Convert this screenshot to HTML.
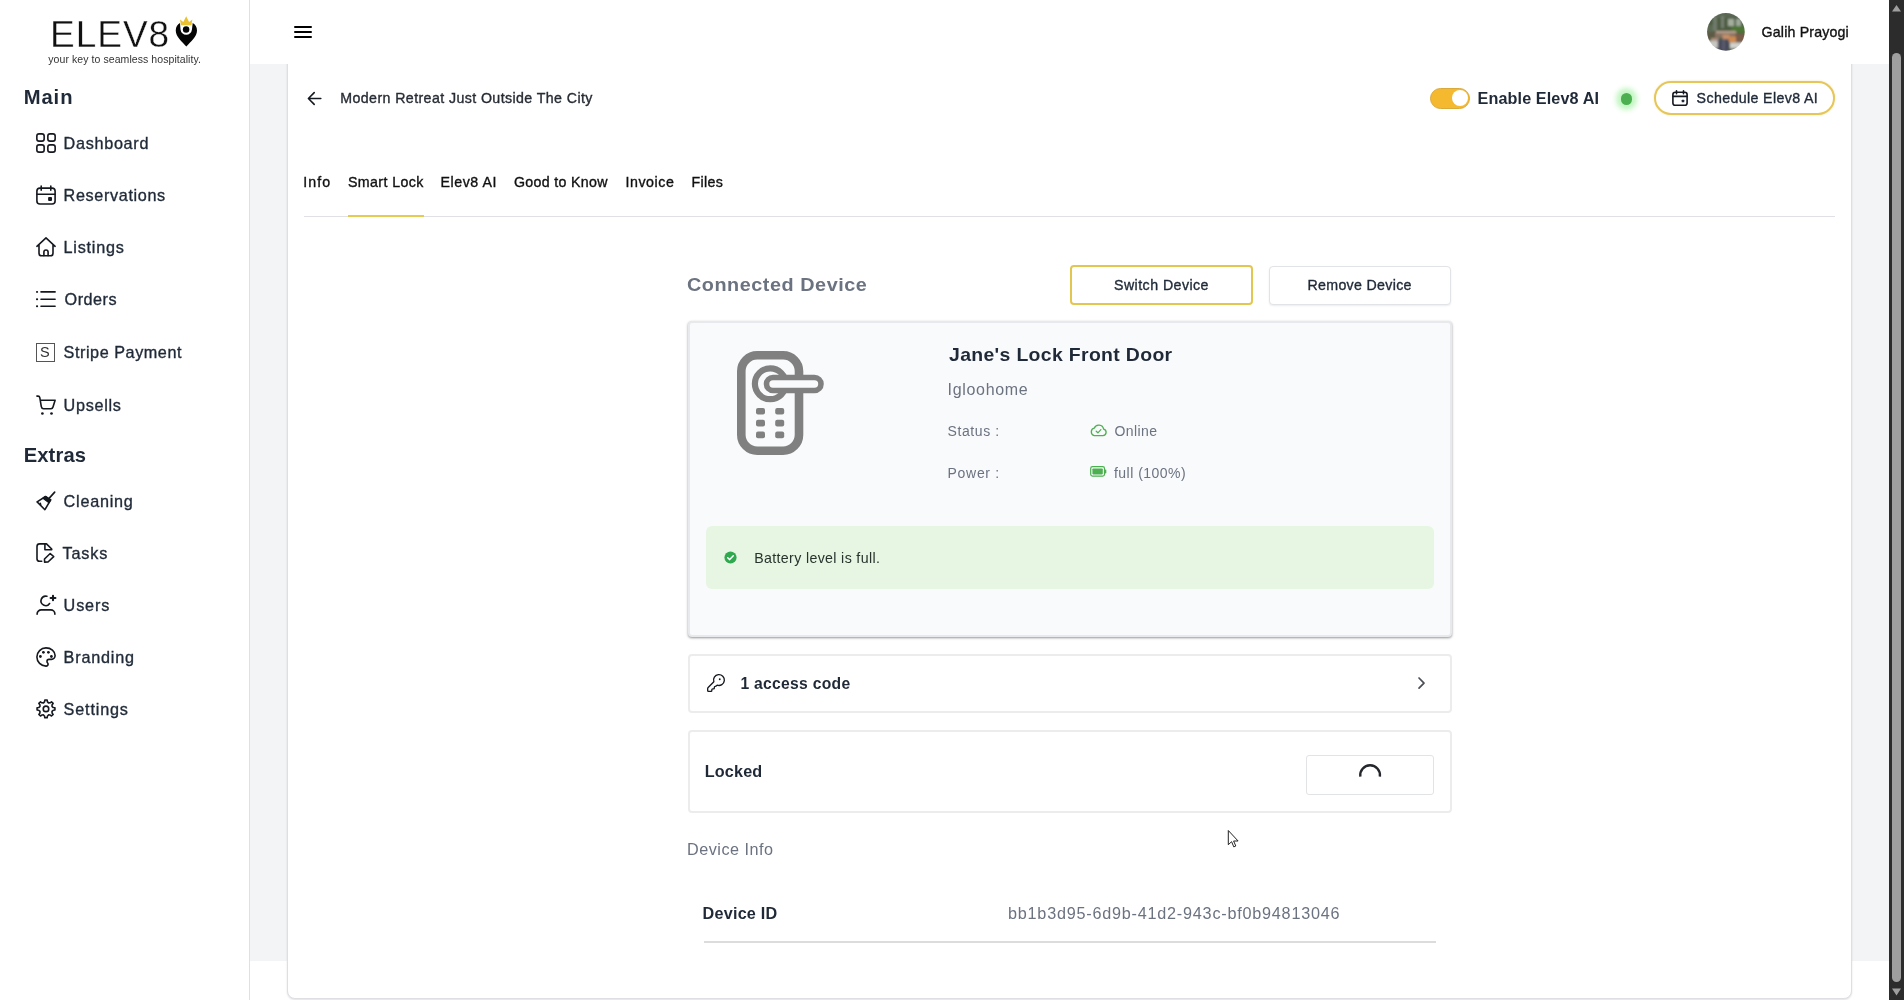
<!DOCTYPE html>
<html lang="en">
<head>
<meta charset="utf-8">
<title>Elev8 - Smart Lock</title>
<style>
*{box-sizing:border-box;margin:0;padding:0}
html,body{width:1904px;height:1000px;overflow:hidden;background:#fff}
body{font-family:"Liberation Sans",sans-serif;position:relative;color:#1f2937}
.abs{position:absolute}
.t{position:absolute;white-space:pre;line-height:20px;display:block;will-change:opacity}
#grey{left:250px;top:64px;width:1639px;height:897px;background:#f3f4f6}
#side{left:0;top:0;width:250px;height:1000px;background:#fff;border-right:1px solid #e0e0e0}
#top{left:250px;top:0;width:1639px;height:64px;background:#fff}
#card{left:287px;top:56px;width:1565px;height:943px;background:#fff;border:1px solid #dddfe3;border-radius:8px;box-shadow:0 1px 2px rgba(0,0,0,.12)}
#sb{left:1889px;top:0;width:15px;height:1000px;background:#2c2c2c}
#sbt{left:1892px;top:53px;width:9px;height:929px;background:#9f9f9f;border-radius:5px}
svg{position:absolute;overflow:visible}
.ic{fill:none;stroke:#14181f;stroke-width:1.6;stroke-linecap:round;stroke-linejoin:round}
</style>
</head>
<body>
<main>
<div id="grey" class="abs"></div>
<section id="card" class="abs"></section>
<!-- back arrow -->
<svg style="left:306px;top:90px" width="17" height="17" viewBox="0 0 17 17"><path class="ic" d="M14.8 8.5H2.6M8.2 2.6 2.4 8.5l5.8 5.9" stroke-width="1.6"/></svg>
<!-- toggle -->
<div class="abs" style="left:1430px;top:88px;width:40px;height:20.5px;border-radius:11px;background:#f4b92f;border:1.5px solid #d9a93c"></div>
<div class="abs" style="left:1452px;top:90.2px;width:16px;height:16px;border-radius:8px;background:#fff"></div>
<!-- green dot -->
<div class="abs" style="left:1620.5px;top:93.3px;width:11.4px;height:11.4px;border-radius:6px;background:#4caf50;box-shadow:0 0 5px 5px rgba(144,238,144,.55)"></div>
<!-- schedule button -->
<div class="abs" style="left:1654px;top:81px;width:180.800px;height:34px;border-radius:17px;border:2px solid #e6c658;background:#fff;box-shadow:0 0 2px rgba(230,198,88,.5)"></div>
<svg style="left:1672px;top:90px" width="16" height="16" viewBox="0 0 16 16"><g class="ic" stroke-width="1.5"><rect x="0.9" y="2.3" width="14.2" height="13" rx="2.3"/><path d="M1 6.4h14M4.5 0.8v3M11.5 0.8v3"/></g><rect x="9.7" y="9.7" width="2.6" height="2.6" rx=".6" fill="#1f2937"/></svg>
<!-- tabs line -->
<div class="abs" style="left:304px;top:216px;width:1531px;height:1px;background:#dfe1e4"></div>
<div class="abs" style="left:348px;top:214.5px;width:76px;height:2.5px;background:#e5cb50"></div>
<!-- buttons -->
<div class="abs" style="left:1070px;top:265px;width:183px;height:40px;border-radius:4px;border:2px solid #e3c64f;background:#fff"></div>
<div class="abs" style="left:1269.2px;top:265.5px;width:182.3px;height:39px;border-radius:4px;border:1px solid #e1e3e6;background:#fff;box-shadow:0 1px 2px rgba(0,0,0,.08)"></div>
<!-- device card -->
<div class="abs" style="left:688px;top:321px;width:764px;height:316px;border-radius:4px;border:2px solid #e7e9ec;background:#f9fafb;box-shadow:0 1px 2.5px rgba(0,0,0,.42)"></div>
<!-- lock icon -->
<svg style="left:730px;top:345px" width="100" height="116" viewBox="730 345 100 116">
<g fill="none" stroke="#808080">
<rect x="741.3" y="355.3" width="57.7" height="95.4" rx="16" stroke-width="8.6"/>
<circle cx="770.3" cy="383.8" r="15.4" stroke-width="6.2" fill="#f9fafb"/>
<rect x="766.5" y="377.5" width="54.5" height="13" rx="6.5" stroke-width="5.6" fill="#f9fafb"/>
</g>
<g fill="#808080">
<rect x="756" y="408" width="9" height="6.6" rx="2"/><rect x="775.2" y="408" width="9" height="6.6" rx="2"/>
<rect x="756" y="419.8" width="9" height="6.6" rx="2"/><rect x="775.2" y="419.8" width="9" height="6.6" rx="2"/>
<rect x="756" y="431.6" width="9" height="6.6" rx="2"/><rect x="775.2" y="431.6" width="9" height="6.6" rx="2"/>
</g></svg>
<!-- cloud icon -->
<svg style="left:1090px;top:423px" width="17" height="14" viewBox="0 0 17 14"><path d="M4.3 12.6h8.6a3.3 3.3 0 0 0 .7-6.5 4.9 4.9 0 0 0-9.4-.9A3.8 3.8 0 0 0 4.3 12.6Z" fill="none" stroke="#4caf50" stroke-width="1.3" stroke-linejoin="round"/><path d="M6.2 8.2l1.7 1.6 3-3.2" fill="none" stroke="#4caf50" stroke-width="1.2" stroke-linecap="round" stroke-linejoin="round"/></svg>
<!-- battery icon -->
<svg style="left:1089.5px;top:466.3px" width="17" height="11" viewBox="0 0 17 11"><rect x="0.7" y="0.7" width="13.8" height="9.4" rx="1.8" fill="none" stroke="#4caf50" stroke-width="1.2"/><rect x="2.4" y="2.4" width="10.4" height="6" rx=".8" fill="#4caf50"/><rect x="14.9" y="3.4" width="1.4" height="4" rx=".6" fill="#4caf50"/></svg>
<!-- alert -->
<div class="abs" style="left:706px;top:526px;width:727.5px;height:63px;border-radius:6px;background:#e6f6e2"></div>
<svg style="left:724.1px;top:550.5px" width="13" height="13" viewBox="0 0 13 13"><circle cx="6.5" cy="6.5" r="6.1" fill="#2fa84f"/><path d="M3.7 6.7l2 1.9 3.6-3.8" fill="none" stroke="#fff" stroke-width="1.5" stroke-linecap="round" stroke-linejoin="round"/></svg>
<!-- access code card -->
<div class="abs" style="left:688px;top:654px;width:764px;height:58.5px;border-radius:4px;border:2px solid #ececec;background:#fff"></div>
<svg style="left:706px;top:673.2px" width="20" height="20" viewBox="0 0 24 24"><path class="ic" stroke-width="1.9" d="M2.586 17.414A2 2 0 0 0 2 18.828V21a1 1 0 0 0 1 1h3a1 1 0 0 0 1-1v-1a1 1 0 0 1 1-1h1a1 1 0 0 0 1-1v-1a1 1 0 0 1 1-1h.172a2 2 0 0 0 1.414-.586l.814-.814a6.5 6.5 0 1 0-4-4z"/><circle cx="16.5" cy="7.5" r="1.1" fill="#14181f"/></svg>
<svg style="left:1417px;top:676px" width="9" height="14" viewBox="0 0 9 14"><path d="M2 2 7 7.100 2 12.200" fill="none" stroke="#4a4e55" stroke-width="1.7" stroke-linecap="round" stroke-linejoin="round"/></svg>
<!-- locked card -->
<div class="abs" style="left:688px;top:730px;width:764px;height:82.5px;border-radius:4px;border:2px solid #ececec;background:#fff"></div>
<div class="abs" style="left:1306px;top:755px;width:128px;height:39.5px;border-radius:3px;border:1.5px solid #e2e3e5;background:#fff"></div>
<svg style="left:1355px;top:760px" width="30" height="20" viewBox="1355 760 30 20"><path d="M1360.3 776.6A9.9 9.9 0 1 1 1379.9 776.6" fill="none" stroke="#24272c" stroke-width="2.4"/></svg>
<!-- device id line -->
<div class="abs" style="left:703.5px;top:941px;width:732.5px;height:1.5px;background:#dcdcdc"></div>
<!-- cursor -->
<svg style="left:1227px;top:829px" width="14" height="20" viewBox="0 0 14 20"><path d="M1.3 1.5v14.2l3.3-3 2.2 5.2 2-.9-2.2-5h4.5Z" fill="#fff" stroke="#222" stroke-width="1" stroke-linejoin="round"/></svg>

<span class="t" style="left:340.30px;top:88px;font-size:14.2px;letter-spacing:0.406px;color:#272c34;font-weight:400;-webkit-text-stroke:0.35px currentColor;">Modern Retreat Just Outside The City</span>
<span class="t" style="left:303.30px;top:172px;font-size:14.2px;letter-spacing:1.067px;color:#111;font-weight:400;-webkit-text-stroke:0.35px currentColor;">Info</span>
<span class="t" style="left:348.00px;top:172px;font-size:14.2px;letter-spacing:0.400px;color:#111;font-weight:400;-webkit-text-stroke:0.35px currentColor;">Smart Lock</span>
<span class="t" style="left:440.60px;top:172px;font-size:14.2px;letter-spacing:0.543px;color:#111;font-weight:400;-webkit-text-stroke:0.35px currentColor;">Elev8 AI</span>
<span class="t" style="left:514.00px;top:172px;font-size:14.2px;letter-spacing:0.327px;color:#111;font-weight:400;-webkit-text-stroke:0.35px currentColor;">Good to Know</span>
<span class="t" style="left:625.40px;top:172px;font-size:14.2px;letter-spacing:0.600px;color:#111;font-weight:400;-webkit-text-stroke:0.35px currentColor;">Invoice</span>
<span class="t" style="left:691.40px;top:172px;font-size:14.2px;letter-spacing:0.400px;color:#111;font-weight:400;-webkit-text-stroke:0.35px currentColor;">Files</span>
<span class="t" style="left:1477.60px;top:88px;font-size:16.2px;letter-spacing:0.100px;color:#1f2937;font-weight:700;">Enable Elev8 AI</span>
<span class="t" style="left:1696.60px;top:88px;font-size:14.2px;letter-spacing:0.375px;color:#1f2937;font-weight:400;-webkit-text-stroke:0.35px currentColor;">Schedule Elev8 AI</span>
<span class="t" style="left:687.00px;top:275px;font-size:18.5px;letter-spacing:0.511px;color:#6b7280;font-weight:700;transform-origin:0 0;transform:scaleX(1.07);">Connected Device</span>
<span class="t" style="left:1114.00px;top:275px;font-size:14.2px;letter-spacing:0.450px;color:#1f2937;font-weight:400;-webkit-text-stroke:0.35px currentColor;">Switch Device</span>
<span class="t" style="left:1307.50px;top:275px;font-size:14.2px;letter-spacing:0.317px;color:#1f2937;font-weight:400;-webkit-text-stroke:0.35px currentColor;">Remove Device</span>
<span class="t" style="left:948.80px;top:345px;font-size:18.5px;letter-spacing:0.317px;color:#1f2937;font-weight:700;transform-origin:0 0;transform:scaleX(1.05);">Jane&#x27;s Lock Front Door</span>
<span class="t" style="left:947.60px;top:380px;font-size:16px;letter-spacing:0.675px;color:#6b7280;font-weight:400;">Igloohome</span>
<span class="t" style="left:947.60px;top:421px;font-size:14px;letter-spacing:0.586px;color:#6b7280;font-weight:400;">Status :</span>
<span class="t" style="left:1114.40px;top:421px;font-size:14px;letter-spacing:0.420px;color:#6b7280;font-weight:400;">Online</span>
<span class="t" style="left:947.60px;top:463px;font-size:14px;letter-spacing:0.683px;color:#6b7280;font-weight:400;">Power :</span>
<span class="t" style="left:1114.00px;top:463px;font-size:14px;letter-spacing:0.470px;color:#6b7280;font-weight:400;">full (100%)</span>
<span class="t" style="left:754.20px;top:548px;font-size:14.2px;letter-spacing:0.352px;color:#27332c;font-weight:400;">Battery level is full.</span>
<span class="t" style="left:740.40px;top:674px;font-size:15.7px;letter-spacing:0.283px;color:#1f2937;font-weight:700;">1 access code</span>
<span class="t" style="left:704.70px;top:761px;font-size:16.2px;letter-spacing:0.180px;color:#1f2937;font-weight:700;">Locked</span>
<span class="t" style="left:687.00px;top:839px;font-size:16.2px;letter-spacing:0.500px;color:#6b7280;font-weight:400;">Device Info</span>
<span class="t" style="left:702.60px;top:903px;font-size:16.2px;letter-spacing:0.212px;color:#1f2937;font-weight:700;">Device ID</span>
<span class="t" style="left:1008.00px;top:903px;font-size:16.2px;letter-spacing:0.780px;color:#6b7280;font-weight:400;">bb1b3d95-6d9b-41d2-943c-bf0b94813046</span>
</main>
<header>
<div id="top" class="abs"></div>
<!-- hamburger -->
<div class="abs" style="left:294px;top:26px;width:18px;height:2px;background:#000;border-radius:1px"></div>
<div class="abs" style="left:294px;top:31px;width:18px;height:2px;background:#000;border-radius:1px"></div>
<div class="abs" style="left:294px;top:36px;width:18px;height:2px;background:#000;border-radius:1px"></div>
<!-- avatar -->
<svg style="left:1707px;top:12.800px" width="38" height="38" viewBox="0 0 38 38">
<defs><clipPath id="avc"><circle cx="18.900" cy="18.850" r="18.850"/></clipPath>
<filter id="avb" x="-20%" y="-20%" width="140%" height="140%"><feGaussianBlur stdDeviation="1.300"/></filter></defs>
<g clip-path="url(#avc)"><g filter="url(#avb)">
<rect x="-4" y="-4" width="46" height="46" fill="#4d5c42"/>
<rect x="-4" y="-4" width="46" height="9" fill="#5a6653"/>
<rect x="6" y="4" width="4" height="14" fill="#6f7a6b"/>
<rect x="14" y="3" width="3" height="12" fill="#75806f"/>
<rect x="21" y="6" width="6" height="7" fill="#a4ae9f"/>
<rect x="29" y="6" width="5" height="7" fill="#9ea99a"/>
<rect x="24" y="13" width="16" height="7" fill="#4d7436"/>
<rect x="-2" y="12" width="8" height="8" fill="#5d6a52"/>
<rect x="-2" y="19" width="13" height="9" fill="#5b5a45"/>
<rect x="9" y="18" width="20" height="2.500" fill="#b9a391"/>
<rect x="8" y="20" width="22" height="4.500" fill="#8b7463"/>
<rect x="28" y="21" width="12" height="8" fill="#7a5b49"/>
<rect x="15.500" y="21.500" width="7" height="5" fill="#c48f6c"/>
<rect x="21.500" y="23.500" width="7.500" height="6" fill="#d08a50"/>
<rect x="4" y="25" width="8" height="3" fill="#a8907c"/>
<rect x="-2" y="28" width="13" height="7" fill="#c6c6c2"/>
<rect x="23" y="29.500" width="14" height="6" fill="#d2d2ce"/>
<rect x="10.800" y="26.500" width="11.200" height="14" fill="#4a4c5d"/>
<rect x="16" y="27" width="1.200" height="10" fill="#6a6c7b"/>
</g></g></svg>

<span class="t" style="left:1761.60px;top:22px;font-size:14.2px;letter-spacing:0.167px;color:#111;font-weight:400;-webkit-text-stroke:0.35px currentColor;">Galih Prayogi</span>
</header>
<aside>
<div id="side" class="abs"></div>
<nav>
<!-- logo -->
<span class="t" id="logo" style="left:50.0px;top:15.1px;font-size:37px;line-height:40px;letter-spacing:1.0px;color:#111;-webkit-text-stroke:0.35px #fff">ELEV8</span>
<svg style="left:170px;top:10px" width="34" height="42" viewBox="170 10 34 42">
<path d="M180 22.900C177.400 24.300 175.750 27 175.750 30.400 C175.750 36.600 182 41.600 186.350 46.400 C190.700 41.600 197 36.600 197 30.400 C197 27 195.300 24.300 192.700 22.900 L191.950 29.600 A5.750 5.750 0 0 1 180.500 29.600 Z" fill="#050505"/>
<circle cx="186.100" cy="29.600" r="3.250" fill="#050505"/>
<path d="M180.900 25.200 180 19.400 183.300 21.900 186.200 16.200 189.100 21.900 192.300 19.400 191.500 25.200Z" fill="#ecc131"/>
</svg>
<!-- dashboard -->
<svg style="left:36px;top:133px" width="20" height="20" viewBox="0 0 20 20"><g class="ic" stroke-width="2"><rect x=".85" y=".85" width="7.3" height="7.3" rx="2.2"/><rect x="11.85" y=".85" width="7.3" height="7.3" rx="2.2"/><rect x=".85" y="11.85" width="7.3" height="7.3" rx="2.2"/><rect x="11.85" y="11.85" width="7.3" height="7.3" rx="2.2"/></g></svg>
<!-- reservations -->
<svg style="left:36px;top:185px" width="20" height="20" viewBox="0 0 20 20"><g class="ic" stroke-width="2"><rect x=".9" y="3.1" width="18.2" height="15.9" rx="3"/><path d="M1 9.300h18M5.200 1.100v4.200M14.800 1.100v4.200"/></g><rect x="12.100" y="12.100" width="3.900" height="3.900" rx=".9" fill="#14181f"/></svg>
<!-- listings -->
<svg style="left:36px;top:237px" width="20" height="20" viewBox="0 0 20 20"><g class="ic" stroke-width="2"><path d="M.9 9.3 10 .9l9.1 8.4M3 8v8.300a2.500 2.500 0 0 0 2.500 2.500h9a2.500 2.500 0 0 0 2.500-2.500V8"/><path d="M7.900 18.600v-3.500a2.100 2.100 0 0 1 4.200 0v3.500"/></g></svg>
<!-- orders -->
<svg style="left:36px;top:290px" width="20" height="18" viewBox="0 0 20 18"><g class="ic" stroke-width="2"><path d="M5 1.900h14.100M5 9.300h14.100M5 16.300h14.100"/><path d="M.9 1.900h.3M.9 9.300h.3M.9 16.300h.3" stroke-width="1.900"/></g></svg>
<!-- stripe -->
<div class="abs" style="left:35.5px;top:342.6px;width:19px;height:19px;border:1px solid #555"></div>
<!-- upsells -->
<svg style="left:36px;top:395px" width="20" height="20" viewBox="0 0 20 20"><g class="ic" stroke-width="1.900"><path d="M.9 1.100h1.200c1 0 1.500.5 1.700 1.500L5.300 11.700c.2 1.200.9 2 2.200 2h7.500c1 0 1.700-.6 2-1.600l2.100-6.900H4.300"/></g><circle cx="6.400" cy="18.500" r="1.350" fill="#14181f"/><circle cx="15.500" cy="18.500" r="1.350" fill="#14181f"/></svg>
<!-- cleaning -->
<svg style="left:36px;top:491px" width="20" height="20" viewBox="0 0 20 20"><g class="ic" stroke-width="1.900"><path d="M18.700 1.100 13.500 6.900"/><path d="M9.500 5.500 14.700 8.900 8.900 18.700 1.100 10.900Z"/><path d="M4.300 12.200l.4 1.500" stroke-width="1.500"/></g><path d="M9.500 5.500 14.700 8.900 13 11.700 7 7.300Z" fill="#14181f" stroke="#14181f" stroke-width="1.200" stroke-linejoin="round"/></svg>
<!-- tasks -->
<svg style="left:36px;top:543px" width="20" height="20" viewBox="0 0 20 20"><g class="ic" stroke-width="2"><path d="M5.700 18.300H3.600a2.600 2.600 0 0 1-2.600-2.600V3.500a2.600 2.600 0 0 1 2.600-2.600h6.900L15.700 6v.7H8.900V.9"/><path d="M14.200 10.500 17.700 13.600 12 19 8.600 19.100 8.500 16Z"/></g></svg>
<!-- users -->
<svg style="left:36px;top:595px" width="20" height="20" viewBox="0 0 20 20"><g class="ic" stroke-width="2"><path d="M10.900 1.300A4.700 4.700 0 1 0 13.600 8.500"/><path d="M17 .9v4.400M14.600 3h4.800" stroke-width="2.100"/><path d="M1.100 19.200v-.1a4.200 4.200 0 0 1 4.200-4.200h9.400a4.200 4.200 0 0 1 4.200 4.200v.1"/></g></svg>
<!-- branding -->
<svg style="left:36px;top:647px" width="20" height="20" viewBox="0 0 20 20"><g class="ic" stroke-width="2"><path d="M10 .9a9.100 9.100 0 0 0 0 18.200c1.300 0 2.100-.9 2.100-2 0-.6-.2-1-.6-1.400-.3-.4-.5-.8-.5-1.300a2 2 0 0 1 2-2h2.400c2.100 0 3.700-1.700 3.700-3.800C19.100 4.400 15 .9 10 .9Z"/></g><g fill="#14181f"><circle cx="4.400" cy="9.500" r="1.400"/><circle cx="7.400" cy="5.300" r="1.400"/><circle cx="12.400" cy="5.300" r="1.400"/><circle cx="15.400" cy="9.500" r="1.400"/></g></svg>
<!-- settings -->
<svg style="left:36px;top:699px" width="20" height="20" viewBox="0 0 20 20"><g class="ic" stroke-width="1.900"><path d="M7.51 3.89 8.65 2.62 8.83 0.98 11.17 0.98 11.35 2.62 12.49 3.89 14.19 3.80 15.48 2.76 17.14 4.42 16.10 5.71 16.01 7.41 17.28 8.55 18.92 8.73 18.92 11.07 17.28 11.25 16.01 12.39 16.10 14.09 17.14 15.38 15.48 17.04 14.19 16.00 12.49 15.91 11.35 17.18 11.17 18.82 8.83 18.82 8.65 17.18 7.51 15.91 5.81 16.00 4.52 17.04 2.86 15.38 3.90 14.09 3.99 12.39 2.72 11.25 1.08 11.07 1.08 8.73 2.72 8.55 3.99 7.41 3.90 5.71 2.86 4.42 4.52 2.76 5.81 3.80Z"/><circle cx="10" cy="9.9" r="2.750"/></g></svg>

<span class="t" style="left:48.30px;top:49px;font-size:10.5px;letter-spacing:0.072px;color:#333;font-weight:400;">your key to seamless hospitality.</span>
<span class="t" style="left:23.70px;top:87px;font-size:20.2px;letter-spacing:0.933px;color:#1f2937;font-weight:700;">Main</span>
<span class="t" style="left:63.60px;top:133px;font-size:16.2px;letter-spacing:0.700px;color:#1f2937;font-weight:400;-webkit-text-stroke:0.35px currentColor;">Dashboard</span>
<span class="t" style="left:63.60px;top:185px;font-size:16.2px;letter-spacing:0.645px;color:#1f2937;font-weight:400;-webkit-text-stroke:0.35px currentColor;">Reservations</span>
<span class="t" style="left:63.60px;top:237px;font-size:16.2px;letter-spacing:0.771px;color:#1f2937;font-weight:400;-webkit-text-stroke:0.35px currentColor;">Listings</span>
<span class="t" style="left:64.60px;top:289px;font-size:16.2px;letter-spacing:0.500px;color:#1f2937;font-weight:400;-webkit-text-stroke:0.35px currentColor;">Orders</span>
<span class="t" style="left:63.60px;top:342px;font-size:16.2px;letter-spacing:0.554px;color:#1f2937;font-weight:400;-webkit-text-stroke:0.35px currentColor;">Stripe Payment</span>
<span class="t" style="left:40.00px;top:342px;font-size:14.5px;letter-spacing:0.000px;color:#333;font-weight:400;">S</span>
<span class="t" style="left:63.60px;top:395px;font-size:16.2px;letter-spacing:0.700px;color:#1f2937;font-weight:400;-webkit-text-stroke:0.35px currentColor;">Upsells</span>
<span class="t" style="left:23.70px;top:445px;font-size:20.2px;letter-spacing:0.120px;color:#1f2937;font-weight:700;">Extras</span>
<span class="t" style="left:63.60px;top:491px;font-size:16.2px;letter-spacing:0.757px;color:#1f2937;font-weight:400;-webkit-text-stroke:0.35px currentColor;">Cleaning</span>
<span class="t" style="left:62.50px;top:543px;font-size:16.2px;letter-spacing:0.875px;color:#1f2937;font-weight:400;-webkit-text-stroke:0.35px currentColor;">Tasks</span>
<span class="t" style="left:63.60px;top:595px;font-size:16.2px;letter-spacing:0.850px;color:#1f2937;font-weight:400;-webkit-text-stroke:0.35px currentColor;">Users</span>
<span class="t" style="left:63.60px;top:647px;font-size:16.2px;letter-spacing:0.800px;color:#1f2937;font-weight:400;-webkit-text-stroke:0.35px currentColor;">Branding</span>
<span class="t" style="left:63.60px;top:699px;font-size:16.2px;letter-spacing:0.829px;color:#1f2937;font-weight:400;-webkit-text-stroke:0.35px currentColor;">Settings</span>
</nav>
</aside>
<div id="sb" class="abs"></div>
<div id="sbt" class="abs"></div>
<svg style="left:1889px;top:0" width="15" height="1000" viewBox="0 0 15 1000"><path d="M3 11.5 L7.5 5 L12 11.5Z M3 988.5 L7.5 995.5 L12 988.5Z" fill="#9f9f9f"/></svg>
</body>
</html>
